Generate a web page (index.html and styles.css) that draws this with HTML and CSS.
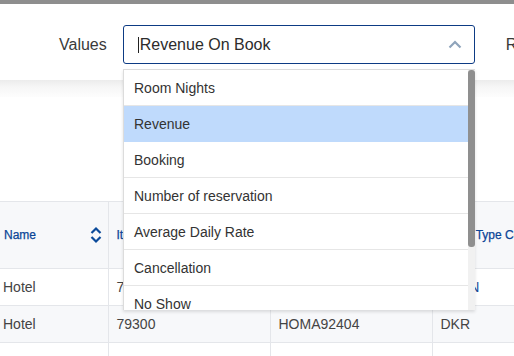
FILE: index.html
```html
<!DOCTYPE html>
<html>
<head>
<meta charset="utf-8">
<link rel="stylesheet" href="styles.css">
</head>
<body>
<div class="topbar"></div>
<div class="header">
  <span class="label">Values</span>
  <div class="select">
    <span class="caret"></span><span class="value">Revenue On Book</span>
    <svg class="chev" width="14" height="9" viewBox="0 0 14 9"><path d="M1.5 7.5 L7 2 L12.5 7.5" fill="none" stroke="#8fa4bb" stroke-width="2.2"/></svg>
  </div>
  <span class="label next">Rows</span>
</div>
<div class="shade"></div>
<div class="spacer"></div>
<div class="tablewrap">
  <table class="grid">
    <colgroup><col class="c1"><col class="c2"><col class="c3"><col class="c4"></colgroup>
    <thead>
      <tr>
        <th class="first"><div class="thin"><span>Name</span>
          <svg class="sort" width="12" height="18" viewBox="0 0 12 18"><path d="M1.5 7 L6 2.5 L10.5 7 M1.5 11 L6 15.5 L10.5 11" fill="none" stroke="#0b4a9a" stroke-width="2.2"/></svg></div></th>
        <th>Item Code</th>
        <th>Booking Code</th>
        <th>Room Type Code</th>
      </tr>
    </thead>
    <tbody>
      <tr><td class="first">Hotel</td><td>79301</td><td>HOMA92403</td><td class="link">RAKN</td></tr>
      <tr class="alt"><td class="first">Hotel</td><td>79300</td><td>HOMA92404</td><td>DKR</td></tr>
      <tr><td class="first">&nbsp;</td><td></td><td></td><td></td></tr>
    </tbody>
  </table>
</div>
<div class="dropdown">
  <ul class="options">
    <li>Room Nights</li>
    <li class="active">Revenue</li>
    <li>Booking</li>
    <li>Number of reservation</li>
    <li>Average Daily Rate</li>
    <li>Cancellation</li>
    <li>No Show</li>
  </ul>
  <div class="scrolltrack"><div class="thumb"></div></div>
</div>
</body>
</html>
```
FILE: styles.css
```css
html, body {
  margin: 0;
  padding: 0;
  background: #fff;
}
body {
  width: 514px;
  height: 356px;
  overflow: hidden;
  position: relative;
  font-family: "Liberation Sans", Arial, sans-serif;
  color: #333;
}
.topbar {
  height: 4px;
  background: #8e8e8e;
}
.header {
  height: 76px;
  box-sizing: border-box;
  padding: 21px 0 0 59px;
  display: flex;
  align-items: flex-start;
  white-space: nowrap;
}
.label {
  font-size: 16px;
  line-height: 39px;
  color: #3a3a3a;
  margin-right: 16px;
}
.label.next {
  margin: 0 0 0 31px;
}
.select {
  flex: none;
  width: 352px;
  height: 39px;
  box-sizing: border-box;
  border: 1px solid #0d3b84;
  border-radius: 3px;
  padding-left: 14px;
  display: flex;
  align-items: center;
  font-size: 16px;
  color: #2c2c2c;
}
.caret {
  width: 1px;
  height: 16px;
  background: #222;
  margin-right: 1px;
}
.value {
  flex: 1;
}
.chev {
  margin-right: 12px;
  margin-top: -1px;
}
.shade {
  height: 17px;
  background: linear-gradient(to bottom, #ececec 0%, #f6f6f6 40%, #fdfdfd 100%);
}
.spacer {
  height: 104px;
}
.tablewrap {
  width: 514px;
  overflow: hidden;
}
.grid {
  border-collapse: collapse;
  table-layout: fixed;
  width: 594px;
  font-size: 14px;
}
.c1 { width: 108px; }
.c2, .c3, .c4 { width: 162px; }
.grid th {
  height: 66px;
  background: #f7f8fa;
  border-top: 1px solid #e4e6ea;
  border-bottom: 1px solid #e4e6ea;
  border-left: 1px solid #e4e6ea;
  text-align: left;
  font-size: 12px;
  font-weight: normal;
  color: #0b4596;
  padding: 0 0 0 8px;
  white-space: nowrap;
  overflow: hidden;
  -webkit-text-stroke: 0.25px #0b4596;
}
.grid th.first {
  border-left: none;
  padding: 0 6px 0 4px;
}
.thin {
  display: flex;
  align-items: center;
  justify-content: space-between;
}
.sort {
  display: block;
}
.grid td {
  height: 36px;
  border-bottom: 1px solid #e4e6ea;
  border-left: 1px solid #e4e6ea;
  padding: 0 0 0 8px;
  color: #444;
  white-space: nowrap;
  overflow: hidden;
}
.grid td.link {
  color: #1d4f9a;
}
.grid td.first {
  border-left: none;
  padding-left: 3px;
}
.grid tr.alt td {
  background: #f7f8fa;
}
.dropdown {
  position: absolute;
  left: 123px;
  top: 69px;
  width: 352px;
  height: 241px;
  box-sizing: border-box;
  border-top: 1px solid #dcdcdc;
  border-left: 1px solid #dcdcdc;
  background: #fff;
  box-shadow: 0 2px 3px rgba(0, 0, 0, 0.12);
  display: flex;
  overflow: hidden;
}
.options {
  list-style: none;
  margin: 0;
  padding: 0;
  flex: 1;
  font-size: 14px;
  color: #333;
}
.options li {
  height: 35px;
  line-height: 37px;
  border-bottom: 1px solid #e6e6e6;
  padding-left: 10px;
  white-space: nowrap;
}
.options li.active {
  background: #bfdafc;
  border-bottom-color: #bfdafc;
}
.scrolltrack {
  width: 7px;
  background: #f1f1f1;
  flex: none;
}
.thumb {
  height: 177px;
  background: #8f8f8f;
  border-radius: 3px;
}
```
